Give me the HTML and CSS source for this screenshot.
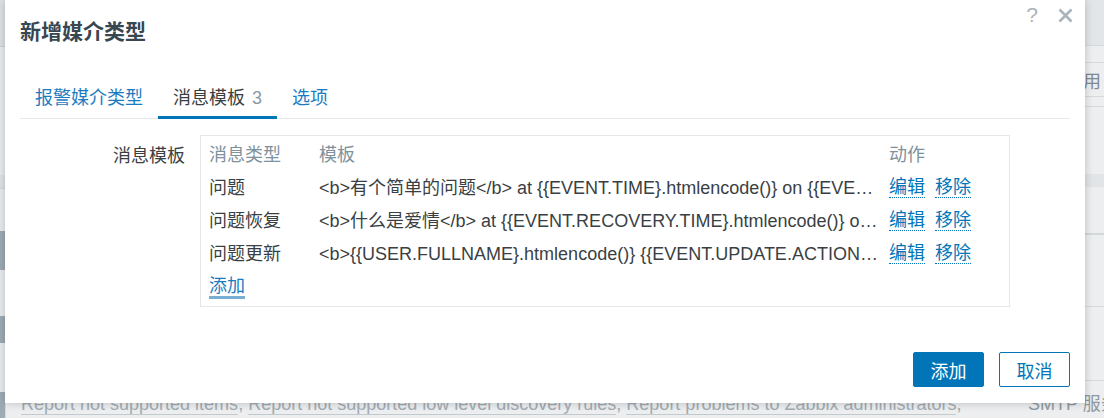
FILE: index.html
```html
<!DOCTYPE html>
<html>
<head>
	<meta charset="utf-8">
	<title>新增媒介类型</title>
	<link rel="stylesheet" href="styles.css">
</head>
<body>

	<div class="page">
		<div class="strip-left">
			<div class="seg seg-head"></div>
			<div class="seg seg-a"></div>
			<div class="seg seg-band"></div>
			<div class="seg seg-b"></div>
			<div class="seg seg-bar bar1"></div>
			<div class="seg seg-c"></div>
			<div class="seg seg-bar bar2"></div>
			<div class="seg seg-d"></div>
			<div class="seg seg-bar bar3"></div>
		</div>
		<div class="page-main">
			<div class="row row-head"></div>
			<div class="row row-sub"></div>
			<div class="row row-filter"><span class="bg-text">启用</span></div>
			<div class="row row-gap"></div>
			<div class="row row-list"></div>
			<div class="row row-band"></div>
			<div class="row row-item thick"></div>
			<div class="row row-item"></div>
			<div class="row row-item"></div>
			<div class="row row-text">
				<div class="bg-links">
					<span class="bg-link">Report not supported items</span>, <span class="bg-link">Report not supported low level discovery rules</span>, <span class="bg-link">Report problems to Zabbix administrators</span>,
				</div>
				<div class="bg-type">SMTP 服务器</div>
			</div>
		</div>
	</div>

	<div class="modal">
		<div class="modal-head">
			<h4>新增媒介类型</h4>
			<div class="head-btns">
				<span class="help">?</span>
				<span class="close">
					<svg width="15" height="15" viewBox="0 0 15 15">
						<path d="M1.5 1.5 L13.5 13.5 M13.5 1.5 L1.5 13.5" stroke="#a9b4bc" stroke-width="2.6" fill="none"/>
					</svg>
				</span>
			</div>
		</div>

		<div class="modal-body">
			<ul class="tabs">
				<li>报警媒介类型</li>
				<li class="active">消息模板 <span class="count">3</span></li>
				<li>选项</li>
			</ul>

			<div class="form-row">
				<label class="form-label">消息模板</label>
				<div class="table-box">
					<table class="tpl-table">
						<colgroup>
							<col class="c-type">
							<col class="c-tpl">
							<col>
						</colgroup>
						<thead>
							<tr>
								<th>消息类型</th>
								<th>模板</th>
								<th>动作</th>
							</tr>
						</thead>
						<tbody>
							<tr>
								<td>问题</td>
								<td class="tpl">&lt;b&gt;有个简单的问题&lt;/b&gt; at {{EVENT.TIME}.htmlencode()} on {{EVE…</td>
								<td class="acts"><a class="act">编辑</a><a class="act">移除</a></td>
							</tr>
							<tr>
								<td>问题恢复</td>
								<td class="tpl">&lt;b&gt;什么是爱情&lt;/b&gt; at {{EVENT.RECOVERY.TIME}.htmlencode()} o…</td>
								<td class="acts"><a class="act">编辑</a><a class="act">移除</a></td>
							</tr>
							<tr>
								<td>问题更新</td>
								<td class="tpl">&lt;b&gt;{{USER.FULLNAME}.htmlencode()} {{EVENT.UPDATE.ACTION…</td>
								<td class="acts"><a class="act">编辑</a><a class="act">移除</a></td>
							</tr>
							<tr>
								<td colspan="3"><a class="add-link">添加</a></td>
							</tr>
						</tbody>
					</table>
				</div>
			</div>
		</div>

		<div class="modal-foot">
			<button class="btn btn-primary">添加</button>
			<button class="btn btn-alt">取消</button>
		</div>
	</div>

</body>
</html>
```

FILE: styles.css
```css
html, body {
	margin: 0;
	padding: 0;
}

body {
	width: 1104px;
	height: 418px;
	overflow: hidden;
	background-color: #eceef0;
	font-family: "Liberation Sans", "Noto Sans CJK SC", sans-serif;
	font-size: 18px;
	color: #3a3f44;
}

/* page behind the dialog */
.page {
	display: flex;
	height: 418px;
}

.strip-left {
	width: 5px;
	display: flex;
	flex-direction: column;
	border-right: 1px solid #d6dbde;
}

.seg-head { height: 46px; background-color: #dde1e4; border-bottom: 1px solid #cdd3d6; }
.seg-a { height: 128px; background-color: #e9ecee; }
.seg-band { height: 13px; background-color: #dfe3e5; }
.seg-b { height: 42px; background-color: #e9ecee; border-top: 1px solid #d3d8db; }
.seg-bar { background-color: #9eabb3; }
.bar1 { height: 39px; }
.seg-c { height: 46px; background-color: #e9ecee; }
.bar2 { height: 27px; }
.seg-d { height: 49px; background-color: #e9ecee; }
.bar3 { height: 26px; }

.page-main {
	flex: 1;
	min-width: 0;
	overflow: hidden;
	display: flex;
	flex-direction: column;
}

.row {
	border-bottom: 1px solid #d5dadd;
}

.row-head { height: 45px; background-color: #e3e6e8; }
.row-sub { height: 16px; }
.row-filter {
	height: 33px;
	display: flex;
	justify-content: flex-end;
	align-items: center;
	padding-right: 3px;
}
.row-gap { height: 9px; }
.row-list { height: 67px; border-bottom: none; }
.row-band { height: 13px; background-color: #e2e5e7; border-bottom: none; }
.row-item { height: 46px; }
.row-item.thick { border-bottom: 2px solid #d3d8db; }
.row-item + .row-item { height: 71px; }
.row-item + .row-item + .row-item { height: 73px; }

.bg-text {
	color: #7f8a92;
	font-family: "Noto Sans CJK SC", sans-serif;
	font-size: 18px;
	white-space: nowrap;
}

.row-text {
	flex: 1;
	border-bottom: none;
	display: grid;
	grid-template-columns: 1022px 200px;
	padding-top: 13px;
	color: #a2acb3;
	line-height: 20px;
	white-space: nowrap;
}

.bg-links {
	padding-left: 15px;
}

.bg-link {
	border-bottom: 1px solid #c3cace;
}

.bg-type {
	color: #8f999f;
}

/* dialog */
.modal {
	position: absolute;
	left: 5px;
	top: 0;
	width: 1080px;
	height: 403px;
	background-color: #ffffff;
	box-shadow: 0 0 8px rgba(0, 0, 0, 0.22);
	display: flex;
	flex-direction: column;
}

.modal-head {
	height: 60px;
	display: flex;
	align-items: center;
	padding: 0 15px;
}

.modal-head h4 {
	flex: 1;
	margin: 0;
	font-size: 21px;
	font-weight: bold;
	color: #384650;
	font-family: "Noto Sans CJK SC", sans-serif;
	line-height: 24px;
}

.head-btns {
	align-self: flex-start;
	display: flex;
	align-items: center;
	margin-top: 3px;
	margin-right: -3px;
	gap: 20px;
}

.help {
	font-size: 21px;
	color: #a9b4bc;
	line-height: 24px;
}

.close {
	display: flex;
	margin-top: 1px;
}

.modal-body {
	padding: 0 15px;
}

.tabs {
	list-style: none;
	margin: 18px 0 0 0;
	padding: 0;
	display: flex;
	border-bottom: 1px solid #e6e9eb;
}

.tabs li {
	padding: 6px 15px;
	line-height: 24px;
	color: #1b7bc1;
	border-bottom: 3px solid transparent;
	font-family: "Noto Sans CJK SC", sans-serif;
	margin-bottom: -1px;
}

.tabs li.active {
	color: #3a3f44;
	border-bottom-color: #0275b8;
}

.count {
	color: #8a9aa4;
	font-family: "Liberation Sans", sans-serif;
	margin-left: 3px;
}

.form-row {
	display: flex;
	margin-top: 16px;
}

.form-label {
	width: 165px;
	margin-right: 15px;
	text-align: right;
	padding-top: 3px;
	line-height: 33px;
	font-family: "Noto Sans CJK SC", sans-serif;
	color: #3a3f44;
}

.table-box {
	width: 793px;
	border: 1px solid #e3e7ea;
	padding: 2px 7px 3px 8px;
}

.tpl-table {
	width: 100%;
	border-collapse: collapse;
	table-layout: fixed;
}

.c-type { width: 110px; }
.c-tpl { width: 570px; }

.tpl-table th,
.tpl-table td {
	height: 33px;
	padding: 0 11px 0 0;
	text-align: left;
	white-space: nowrap;
	overflow: hidden;
	line-height: 20px;
}

.tpl-table th {
	font-weight: normal;
	color: #7e919c;
}

.acts {
	display: flex;
	align-items: center;
	gap: 10px;
}

.act {
	display: inline-block;
	color: #0275b8;
	border-bottom: 1px dotted #0275b8;
	line-height: 20px;
	cursor: pointer;
}

.add-link {
	display: inline-block;
	color: #1b7bc1;
	line-height: 20px;
	border-bottom: 3px solid #78aed3;
	margin-top: 2px;
	cursor: pointer;
}

.modal-foot {
	margin-top: auto;
	display: flex;
	justify-content: flex-end;
	gap: 15px;
	padding: 0 15px 16px 0;
}

.btn {
	height: 35px;
	padding: 0 16px;
	min-width: 71px;
	font-size: 18px;
	font-family: "Noto Sans CJK SC", sans-serif;
	border: 1px solid #0275b8;
	border-radius: 2px;
	cursor: pointer;
}

.btn-primary {
	background-color: #0275b8;
	color: #ffffff;
}

.btn-alt {
	background-color: #ffffff;
	color: #0275b8;
}
```
